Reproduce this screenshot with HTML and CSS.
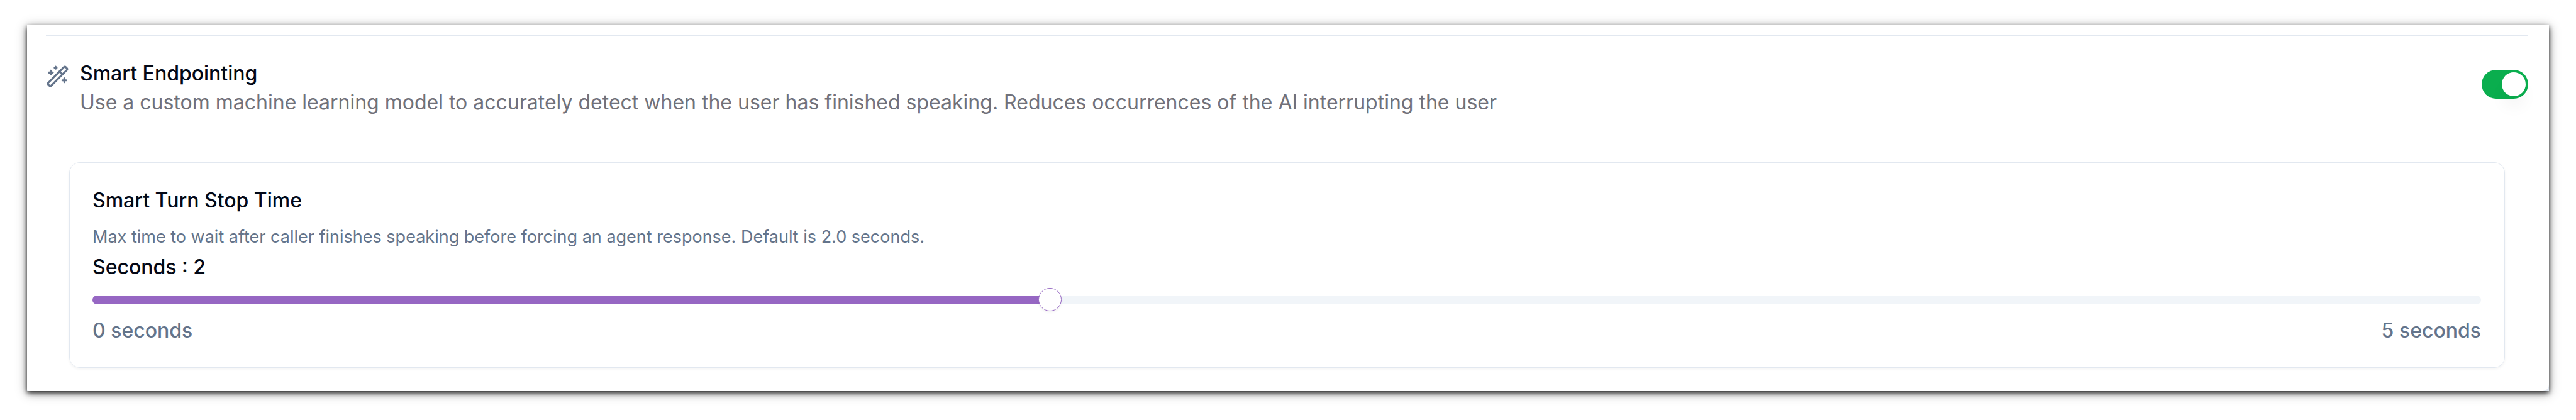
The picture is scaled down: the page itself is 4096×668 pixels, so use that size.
FILE: index.html
```html
<!DOCTYPE html>
<html lang="en">
<head>
  <meta charset="utf-8">
  <meta name="viewport" content="width=device-width, initial-scale=1">
  <title>Smart Endpointing</title>
  <link rel="stylesheet" href="styles.css">
</head>
<body>
  <main class="frame">
    <section class="panel">
      <header class="setting">
        <svg class="setting-icon" viewBox="0 0 24 24" fill="none" stroke="currentColor" stroke-width="2" stroke-linecap="round" stroke-linejoin="round" aria-hidden="true">
          <path d="m21.64 3.64-1.28-1.28a1.21 1.21 0 0 0-1.72 0L2.36 18.64a1.21 1.21 0 0 0 0 1.72l1.28 1.28a1.2 1.2 0 0 0 1.72 0L21.64 5.36a1.2 1.2 0 0 0 0-1.72"/>
          <path d="m14 7 3 3"/>
          <path d="M5 6v4"/>
          <path d="M19 14v4"/>
          <path d="M10 2v2"/>
          <path d="M7 8H3"/>
          <path d="M21 16h-4"/>
          <path d="M11 3H9"/>
        </svg>
        <div class="setting-text">
          <label class="title" for="smart-endpointing">Smart Endpointing</label>
          <p class="description" id="endpointing-help">Use a custom machine learning model to accurately detect when the user has finished speaking. Reduces occurrences of the AI interrupting the user</p>
        </div>
        <input class="switch" type="checkbox" role="switch" id="smart-endpointing" aria-describedby="endpointing-help" checked>
      </header>
      <div class="card">
        <h2 class="title">Smart Turn Stop Time</h2>
        <p class="hint">Max time to wait after caller finishes speaking before forcing an agent response. Default is 2.0 seconds.</p>
        <label class="title value" for="stop-time">Seconds : 2</label>
        <input class="slider" type="range" id="stop-time" min="0" max="5" step="0.1" value="2">
        <div class="range">
          <span>0 seconds</span>
          <span>5 seconds</span>
        </div>
      </div>
    </section>
  </main>
</body>
</html>
```
FILE: styles.css
```css
* {
  box-sizing: border-box;
}

body {
  margin: 0;
  background: #fff;
  color: #020817;
  font-family: Inter, "Liberation Sans", sans-serif;
  font-size: 32px;
  line-height: 46px;
}

h2,
p {
  margin: 0;
}

.frame {
  margin: 40px 43px 46px;
  background: #e2e8f0;
  box-shadow: 0 3px 8px rgba(0, 0, 0, 0.85), 0 3px 18px rgba(0, 0, 0, 0.3);
}

.panel {
  padding: 16px 33px 37px 30px;
  background: #fff;
  border-radius: 0 0 10px 3px;
}

.setting {
  display: flex;
  align-items: flex-start;
  gap: 17px;
  padding-top: 37px;
  border-top: 1px solid #e2e8f0;
}

.setting-icon {
  flex: none;
  width: 37px;
  height: 37px;
  margin-top: 9px;
  color: #64748b;
}

.setting-text {
  flex: 1;
}

.title {
  display: block;
  font-size: 32px;
  font-weight: 500;
  line-height: 46px;
}

.description {
  color: #71717a;
}

.switch {
  appearance: none;
  flex: none;
  display: flex;
  justify-content: flex-end;
  align-items: center;
  width: 74px;
  height: 46px;
  margin: 17px 0 0;
  padding: 4px;
  border-radius: 23px;
  background: #0aae4e;
  cursor: pointer;
}

.switch::before {
  content: "";
  width: 38px;
  height: 38px;
  border-radius: 50%;
  background: #fff;
  box-shadow: 0 19px 28px -6px rgba(0, 0, 0, 0.08);
}

.switch:not(:checked) {
  justify-content: flex-start;
  background: #e2e8f0;
}

.card {
  display: flex;
  flex-direction: column;
  margin: 72px 37px 0;
  padding: 37px 37px 35px 36px;
  border: 1px solid #e2e8f0;
  border-radius: 17px;
  box-shadow: 0 2px 4px rgba(0, 0, 0, 0.05);
}

.hint {
  margin: 12px 0 2px;
  color: #64748b;
  font-size: 27px;
}

.slider {
  appearance: none;
  width: 100%;
  height: 37px;
  margin: 10px 0 8px;
  background: transparent;
  cursor: pointer;
}

.slider::-webkit-slider-runnable-track {
  height: 14px;
  border-radius: 7px;
  background: linear-gradient(to right, #9667c3 40%, #f1f5f9 40%);
}

.slider::-webkit-slider-thumb {
  appearance: none;
  width: 37px;
  height: 37px;
  margin-top: -12px;
  border: 1px solid #9667c3;
  border-radius: 50%;
  background: #fff;
  box-shadow: 0 2px 4px rgba(0, 0, 0, 0.05);
}

.range {
  display: flex;
  justify-content: space-between;
  color: #64748b;
  font-weight: 500;
}
```
